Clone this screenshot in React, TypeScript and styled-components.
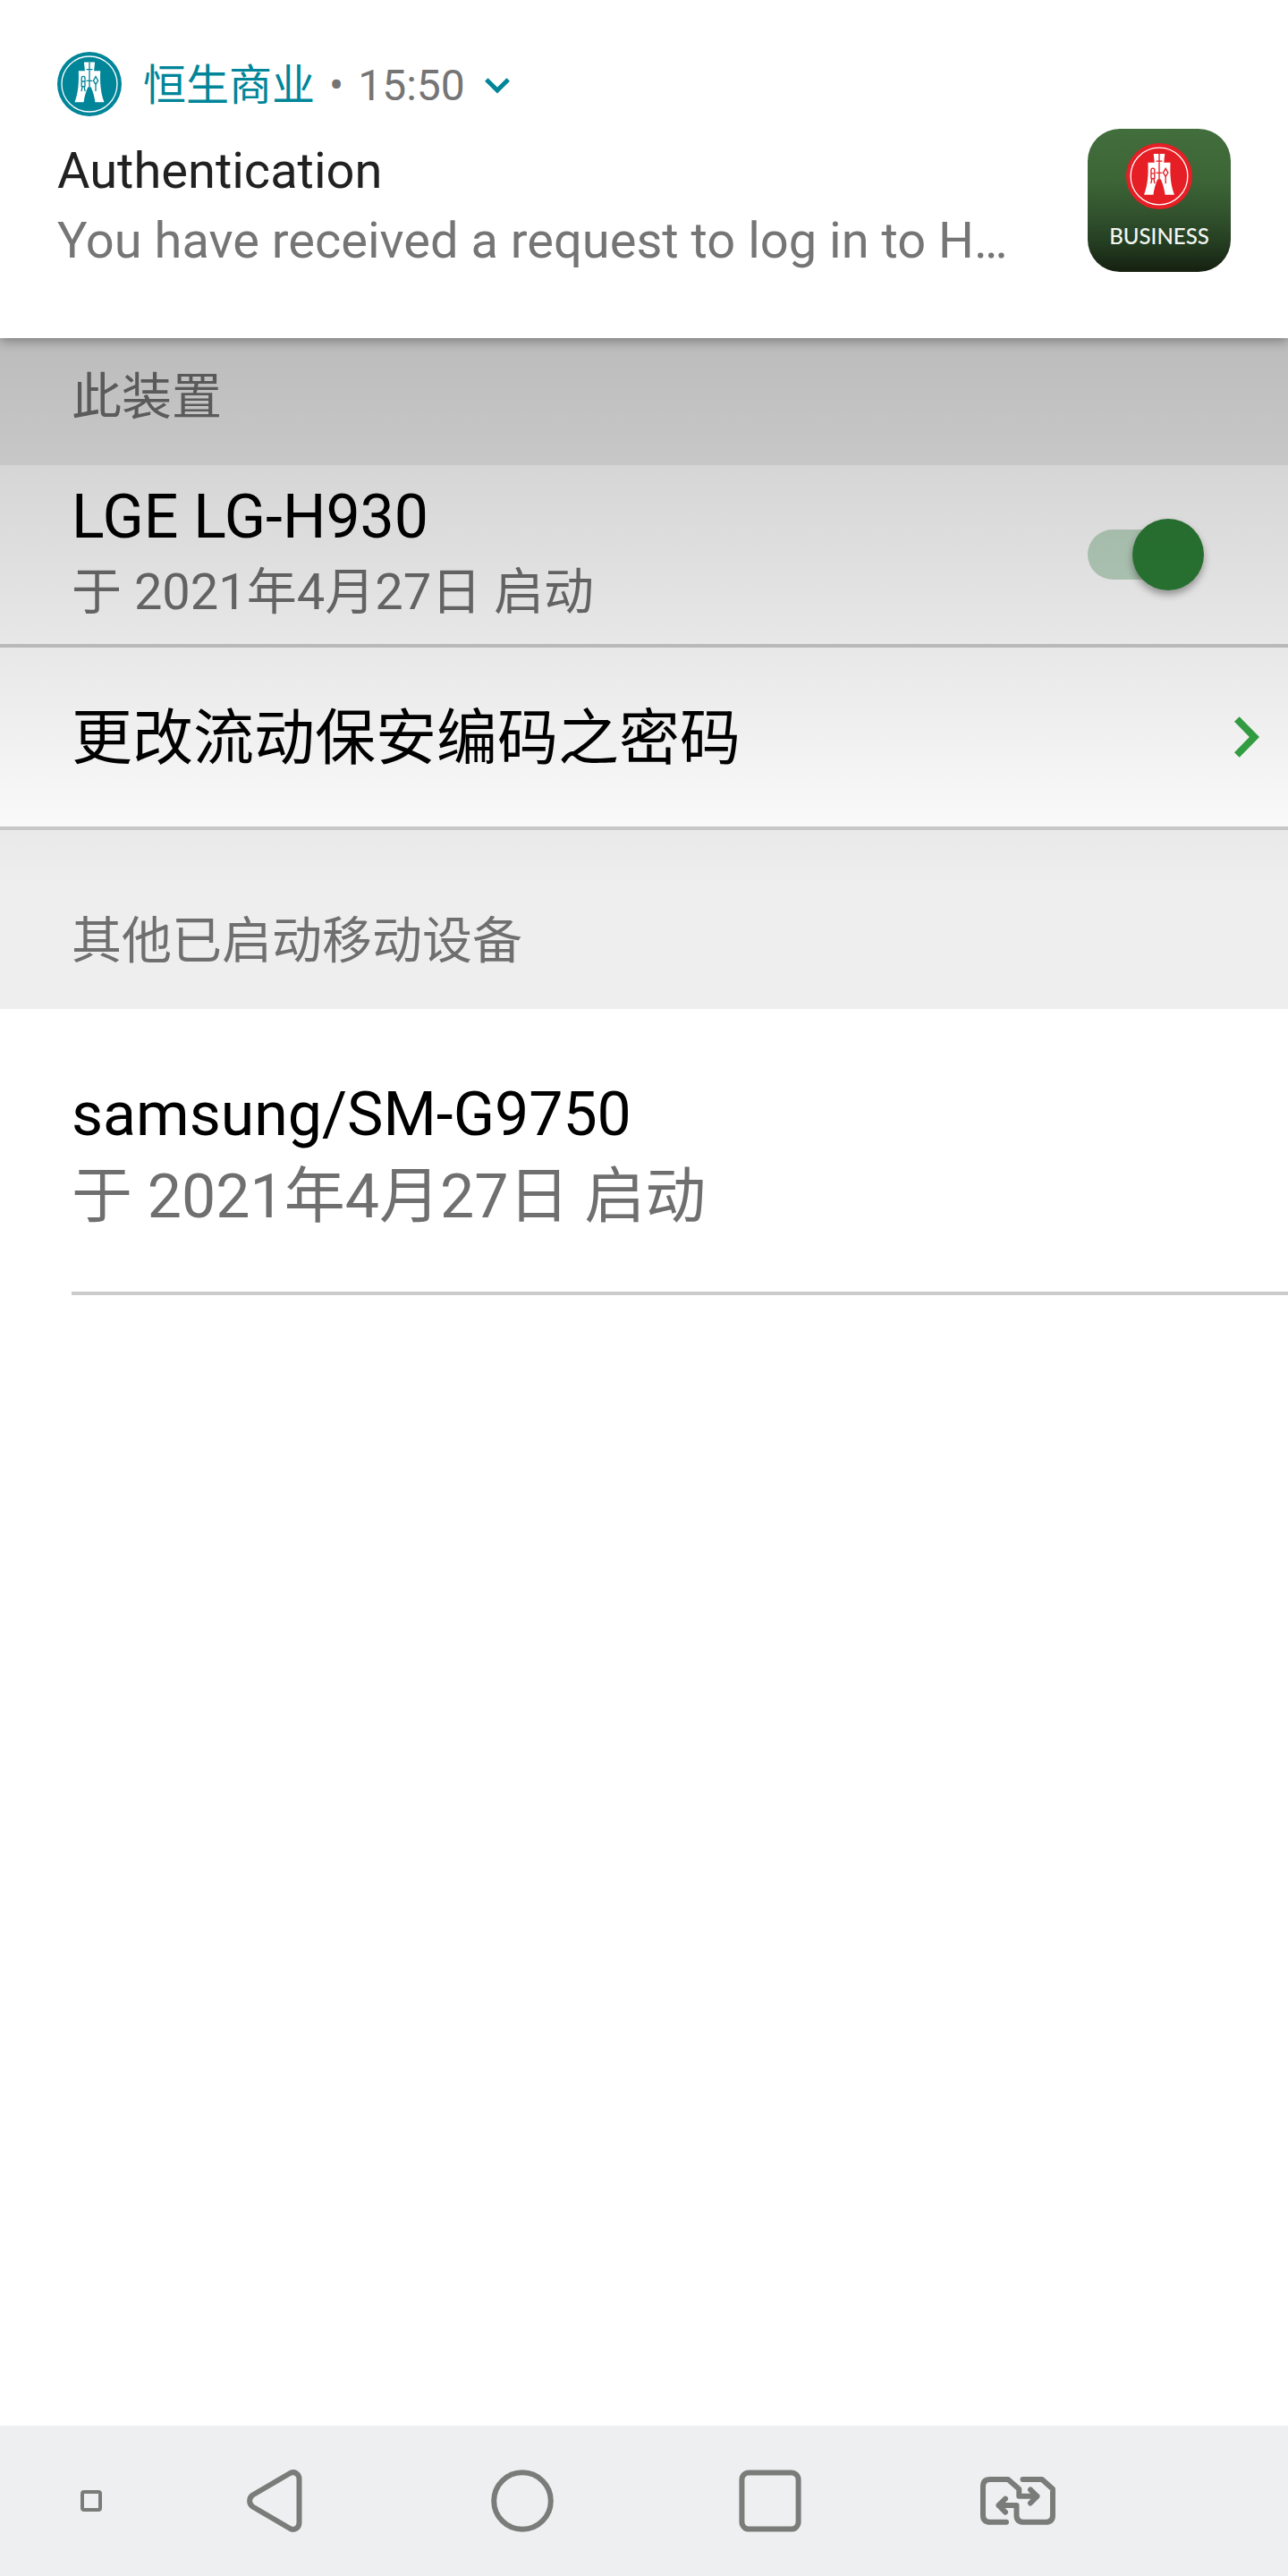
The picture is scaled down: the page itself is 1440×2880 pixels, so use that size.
import React from "react";
import styled, { createGlobalStyle } from "styled-components";

const GlobalStyle = createGlobalStyle`
  *, *::before, *::after { box-sizing: border-box; }
  body {
    margin: 0;
    background: #ffffff;
    font-family: Roboto, "Noto Sans CJK SC", sans-serif;
  }
  h1, h2, p { margin: 0; font-weight: 400; }
  button { font: inherit; color: inherit; border: 0; padding: 0; background: none; cursor: pointer; }
  svg { display: block; flex: none; }
`;

const Screen = styled.div`
  display: flex;
  flex-direction: column;
  min-height: 100vh;
`;

/* ---------- Notification ---------- */

const Notification = styled.section`
  position: relative;
  z-index: 2;
  padding: 58px 64px 70px;
  background: #ffffff;
  box-shadow: 0 3px 12px rgba(0, 0, 0, 0.35);
`;

const NotificationHeader = styled.header`
  display: flex;
  align-items: center;
  gap: 24px;
  height: 72px;
`;

const HeaderMeta = styled.div`
  display: flex;
  align-items: center;
  gap: 16px;
  padding-top: 4px;
  font-size: 48px;
  line-height: 68px;
  color: #757575;
`;

const AppName = styled.span`
  color: #008599;
`;

const ExpandButton = styled.button`
  display: flex;
  align-items: center;
  justify-content: center;
  width: 40px;
  height: 40px;
`;

const NotificationBody = styled.div`
  display: flex;
  align-items: flex-start;
  justify-content: space-between;
  gap: 24px;
  margin-top: 14px;
`;

const NotificationText = styled.div`
  min-width: 0;
  padding-top: 8px;
  font-size: 56px;
  line-height: 78px;
`;

const NotificationTitle = styled.h2`
  font-size: 56px;
  color: #212121;
`;

const NotificationMessage = styled.p`
  overflow: hidden;
  white-space: nowrap;
  text-overflow: ellipsis;
  color: #757575;
`;

const AppTile = styled.div`
  display: flex;
  flex: none;
  flex-direction: column;
  align-items: center;
  width: 160px;
  height: 160px;
  padding-top: 16px;
  border-radius: 36px;
  background: linear-gradient(#426d3c 0%, #3d6637 35%, #31522d 60%, #243d21 80%, #162010 100%);
`;

const TileLabel = styled.span`
  margin-top: 14px;
  font-family: Lato, sans-serif;
  font-size: 24px;
  font-weight: 500;
  line-height: 32px;
  color: #f2f5f1;
`;

/* ---------- Settings list ---------- */

const Settings = styled.main`
  position: relative;
  flex: 1;
  color: #000000;

  &::after {
    content: "";
    position: absolute;
    inset: 0 0 auto;
    height: 612px;
    background: linear-gradient(rgba(0, 0, 0, 0.21), rgba(0, 0, 0, 0));
    pointer-events: none;
  }
`;

const SectionLabel = styled.h2<{ $first?: boolean }>`
  padding: ${(p) => (p.$first ? 24 : 82)}px 80px 34px;
  background: #eeeeee;
  font-size: 56px;
  line-height: 84px;
  color: #6f6f6f;
`;

const Row = styled.div`
  display: flex;
  align-items: center;
  justify-content: space-between;
  height: 204px;
  padding: 0 94px 0 80px;
  border-bottom: 4px solid #cbcbcb;
`;

const LinkRow = styled.button`
  display: flex;
  align-items: center;
  justify-content: space-between;
  width: 100%;
  height: 204px;
  padding: 0 32px 0 80px;
  border-bottom: 4px solid #cbcbcb;
  text-align: left;
`;

const DeviceRow = styled.div`
  margin-left: 80px;
  padding: 76px 0 64px;
  border-bottom: 4px solid #cbcbcb;
`;

const Title = styled.span`
  display: block;
  font-size: 68px;
  line-height: 84px;
`;

const LinkTitle = styled(Title)`
  padding-top: 4px;
`;

const Detail = styled.span<{ $large?: boolean }>`
  display: block;
  margin-top: ${(p) => (p.$large ? 8 : 0)}px;
  font-size: ${(p) => (p.$large ? 68 : 56)}px;
  line-height: 84px;
  color: #6f6f6f;
`;

const Switch = styled.input`
  appearance: none;
  display: grid;
  align-items: center;
  width: 130px;
  height: 80px;
  margin: 0;
  cursor: pointer;

  &::before, &::after {
    content: "";
    grid-area: 1 / 1;
  }
  &::before {
    width: 120px;
    height: 56px;
    border-radius: 28px;
    background: #cccccc;
  }
  &::after {
    width: 80px;
    height: 80px;
    border-radius: 50%;
    background: #f5f5f5;
    box-shadow: 0 5px 8px rgba(0, 0, 0, 0.35);
  }
  &:checked::before { background: #c0d9c6; }
  &:checked::after { justify-self: end; background: #2c7e36; }
`;

/* ---------- Navigation bar ---------- */

const NavBar = styled.nav`
  display: grid;
  grid-template-columns: 168px repeat(4, 1fr) 164px;
  height: 168px;
  background: #edeff1;
  color: #7a7c7a;
`;

const NavButton = styled.button<{ $corner?: boolean }>`
  display: flex;
  align-items: center;
  justify-content: center;
  padding-left: ${(p) => (p.$corner ? 36 : 0)}px;
`;

function CoinLogo({ size, color }: { size: number; color: string }) {
  return (
    <svg width={size} height={size} viewBox="0 0 72 72" aria-hidden="true">
      <circle cx="36" cy="36" r="36" fill={color} />
      <circle cx="36" cy="36" r="31" fill="none" stroke="#fff" strokeWidth="1.3" />
      <path
        d="M29.9 11.6H42.1L41.1 21.2H48.2C47.7 33 48.2 45 52.5 56.2H42.4C41.6 50 39.8 44 37.8 39.5H34.2C32.2 44 30.4 50 29.6 56.2H19.5C23.8 45 24.3 33 23.8 21.2H30.9Z"
        fill="#fff"
      />
      <g fill="none" stroke={color} strokeWidth="1.3">
        <path d="M36 11.6V40M32.6 19.6H39.4M32.6 32.4H39.4" />
        <path d="M27.2 38.6V29.2Q27.2 27.4 29.1 27.4T31 29.2V38.6ZM27.2 33H31M28.2 38.6L27 44M30 38.6L31.2 44" />
        <path d="M43 27.6L45.6 32.2L43 36.4L40.4 32.2ZM43 36.4V44" />
      </g>
    </svg>
  );
}

export default function App() {
  return (
    <Screen>
      <GlobalStyle />
      <Notification>
        <NotificationHeader>
          <CoinLogo size={72} color="#008599" />
          <HeaderMeta>
            <AppName>恒生商业</AppName>
            <span>•</span>
            <time>15:50</time>
            <ExpandButton aria-label="展开">
              <svg width="28" height="18" viewBox="0 0 28 18" fill="none" stroke="#008599" strokeWidth="5">
                <path d="M1.8 2L14 14L26.2 2" />
              </svg>
            </ExpandButton>
          </HeaderMeta>
        </NotificationHeader>
        <NotificationBody>
          <NotificationText>
            <NotificationTitle>Authentication</NotificationTitle>
            <NotificationMessage>You have received a request to log in to H…</NotificationMessage>
          </NotificationText>
          <AppTile>
            <CoinLogo size={74} color="#e61e25" />
            <TileLabel>BUSINESS</TileLabel>
          </AppTile>
        </NotificationBody>
      </Notification>

      <Settings>
        <SectionLabel $first>此装置</SectionLabel>
        <Row>
          <label htmlFor="this-device">
            <Title>LGE LG-H930</Title>
            <Detail>于 2021年4月27日 启动</Detail>
          </label>
          <Switch id="this-device" type="checkbox" role="switch" defaultChecked />
        </Row>
        <LinkRow>
          <LinkTitle>更改流动保安编码之密码</LinkTitle>
          <svg width="28" height="46" viewBox="0 0 28 46" fill="none" stroke="#35a545" strokeWidth="8" aria-hidden="true">
            <path d="M2.8 3L22.4 23L2.8 43" />
          </svg>
        </LinkRow>
        <SectionLabel>其他已启动移动设备</SectionLabel>
        <DeviceRow>
          <Title>samsung/SM-G9750</Title>
          <Detail $large>于 2021年4月27日 启动</Detail>
        </DeviceRow>
      </Settings>

      <NavBar>
        <NavButton $corner aria-label="固定导航栏">
          <svg width="24" height="24" viewBox="0 0 24 24" fill="none" stroke="currentColor" strokeWidth="4">
            <rect x="2" y="2" width="20" height="20" rx="2" />
          </svg>
        </NavButton>
        <NavButton aria-label="返回">
          <svg width="62" height="70" viewBox="0 0 62 70" fill="none" stroke="currentColor" strokeWidth="6">
            <path d="M6.5 28.5L47.5 4.5C53 1 58.5 5 58.5 10.5V59.5C58.5 65 53 69 47.5 65.5L6.5 41.5C2 38.5 2 31.5 6.5 28.5Z" />
          </svg>
        </NavButton>
        <NavButton aria-label="主页">
          <svg width="70" height="70" viewBox="0 0 70 70" fill="none" stroke="currentColor" strokeWidth="6">
            <circle cx="35" cy="35" r="31.8" />
          </svg>
        </NavButton>
        <NavButton aria-label="最近使用">
          <svg width="70" height="70" viewBox="0 0 70 70" fill="none" stroke="currentColor" strokeWidth="6">
            <rect x="3.4" y="3.4" width="63.2" height="63.2" rx="8" />
          </svg>
        </NavButton>
        <NavButton aria-label="切换 SIM 卡">
          <svg
            width="84"
            height="54"
            viewBox="0 0 84 54"
            fill="none"
            stroke="currentColor"
            strokeWidth="6"
            strokeLinecap="round"
            strokeLinejoin="round"
          >
            <path d="M29 50.8H11Q3 50.8 3 43V11Q3 3 11 3H31L43.3 13.7V21.8H63.5M56 14.5L63.5 21.8L56 29.5" />
            <path d="M47.5 3H69L81 13.7V43Q81 50.8 73 50.8H48.5Q40.5 50.8 40.5 43V32H20.5M28 24.7L20.5 32L28 39.7" />
          </svg>
        </NavButton>
      </NavBar>
    </Screen>
  );
}
